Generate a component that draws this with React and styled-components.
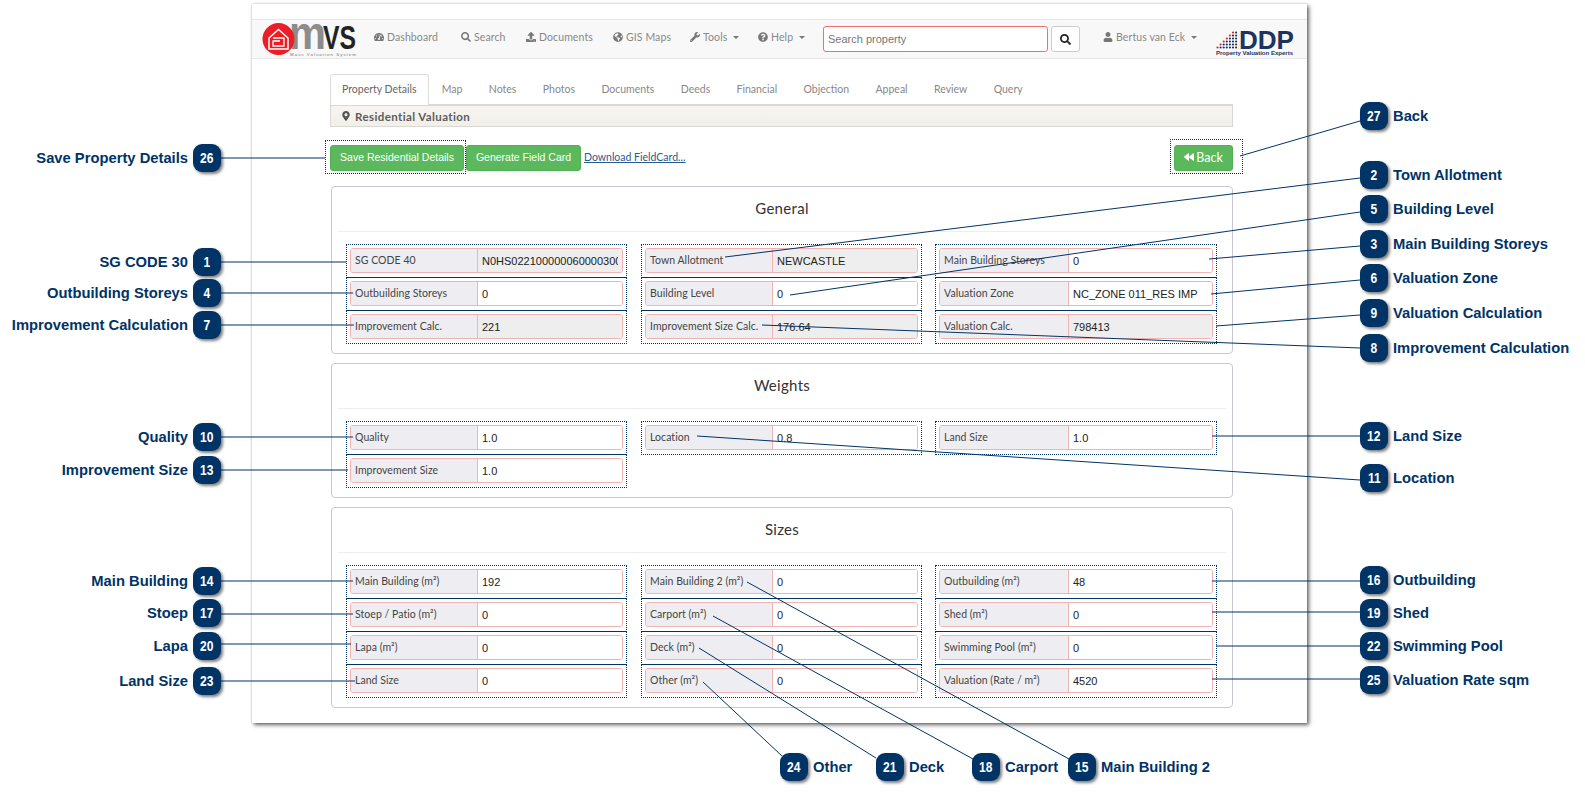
import React from 'react';
import styled, { createGlobalStyle } from 'styled-components';
import {
  FaTachometerAlt,
  FaSearch,
  FaUpload,
  FaGlobeAmericas,
  FaWrench,
  FaQuestionCircle,
  FaUser,
  FaMapMarkerAlt,
  FaBackward,
} from 'react-icons/fa';

const NAVY = '#003366';
const UI_FONT = '"Lato", "Noto Sans", sans-serif';
const ARIAL = '"Liberation Sans", Arial, sans-serif';

const GlobalStyle = createGlobalStyle`
  html, body {
    margin: 0;
    padding: 0;
    background: #fff;
    font-family: ${ARIAL};
  }
  * { box-sizing: border-box; }
`;

const Page = styled.div`
  position: relative;
  width: 1585px;
  height: 792px;
  overflow: hidden;
  padding: 4px 0 0 252px;
`;

const Shot = styled.div`
  width: 1055px;
  height: 719px;
  background: #fff;
  padding-top: 15px;
  box-shadow: 2px 2px 4px rgba(0, 0, 0, 0.6), 0 0 2px rgba(0, 0, 0, 0.18);
`;

const Navbar = styled.nav`
  display: flex;
  align-items: center;
  height: 40px;
  padding-left: 10px;
  background: #f8f8f8;
  border-top: 1px solid #e7e7e7;
  border-bottom: 1px solid #e7e7e7;
`;

const NavList = styled.div`
  display: flex;
  align-items: center;
  margin-left: 7px;
`;

const NavItem = styled.a`
  display: flex;
  align-items: center;
  gap: 3px;
  width: ${(props) => props.$w}px;
  padding-left: 10px;
  margin-top: -4px;
  font: 400 10.5px ${UI_FONT};
  letter-spacing: 0.1px;
  color: #888;
  white-space: nowrap;
  svg { font-size: 10px; color: #777; }
`;

const Caret = styled.span`
  width: 0;
  height: 0;
  margin-left: 3px;
  border-top: 3px solid #777;
  border-left: 3px solid transparent;
  border-right: 3px solid transparent;
`;

const SearchInput = styled.input`
  width: 225px;
  height: 26px;
  padding: 0 4px;
  border: 1px solid #f07070;
  border-radius: 3px;
  background: #fff;
  font: 11px ${ARIAL};
  &::placeholder { color: #777; opacity: 1; }
`;

const SearchButton = styled.button`
  display: flex;
  align-items: center;
  justify-content: center;
  width: 29px;
  height: 26px;
  margin-left: 3px;
  padding: 0;
  background: #fff;
  border: 1px solid #ccc;
  border-radius: 3px;
  color: #222;
  font-size: 11px;
`;

const UserMenu = styled(NavItem)`
  margin-left: 23px;
  padding: 0;
`;

const Content = styled.div`
  width: 903px;
  margin-left: 78px;
`;

const Tabs = styled.div`
  display: flex;
  align-items: flex-end;
  height: 30px;
  margin-top: 15px;
`;

const Tab = styled.a`
  display: flex;
  align-items: center;
  height: ${(props) => (props.$active ? '31px' : '30px')};
  padding: 0 ${(props) => (props.$active ? '11px' : '12.2px')} 2px;
  margin-bottom: ${(props) => (props.$active ? '-1px' : '0')};
  font: 400 10.5px ${UI_FONT};
  color: ${(props) => (props.$active ? '#666' : '#888')};
  background: ${(props) => (props.$active ? '#fff' : 'transparent')};
  border: ${(props) => (props.$active ? '1px solid #ddd' : '1px solid transparent')};
  border-bottom: none;
  border-radius: 3px 3px 0 0;
  position: relative;
  z-index: 1;
`;

const Heading = styled.div`
  display: flex;
  align-items: center;
  gap: 4px;
  height: 23px;
  padding-left: 10px;
  background: linear-gradient(#f7f5f1, #f2efe9);
  border: 1px solid #d8d8d4;
  border-top: 2px solid #d8d8d4;
  font: 700 11.5px ${UI_FONT};
  letter-spacing: 0.4px;
  color: #5c5c5c;
  svg { font-size: 10px; color: #555; }
`;

const ActionRow = styled.div`
  display: flex;
  align-items: flex-start;
  height: 34px;
  margin: 13px -10px 0 -5px;
`;

const Hotspot = styled.div`
  border: 1px dotted ${NAVY};
`;

const SaveSpot = styled(Hotspot)`
  width: 141px;
  height: 34px;
  padding: 4px 1px 2px 4px;
`;

const BackSpot = styled(Hotspot)`
  width: 73px;
  height: 35px;
  margin-left: auto;
  margin-top: -1px;
  padding: 5px 9px 3px 3px;
`;

const GreenButton = styled.button`
  height: 26px;
  padding: 0 0 2px;
  background: #5cb85c;
  border: 1px solid #55b055;
  border-radius: 3px;
  color: #fff;
  font: 10.5px ${ARIAL};
  white-space: nowrap;
`;

const SaveButton = styled(GreenButton)`
  width: 134px;
`;

const CardButton = styled(GreenButton)`
  width: 115px;
  margin: 5px 0 0 0;
`;

const DownloadLink = styled.a`
  margin: 11px 0 0 3px;
  font: 400 10.5px ${UI_FONT};
  color: #2a5a8f;
  text-decoration: underline;
`;

const BackButton = styled(GreenButton)`
  display: flex;
  align-items: center;
  justify-content: center;
  gap: 2px;
  width: 59px;
  font: 400 12.5px ${UI_FONT};
  svg { font-size: 10px; }
`;

const Sections = styled.div`
  display: flex;
  flex-direction: column;
  gap: 9px;
  margin-top: 12px;
  padding-left: 1px;
`;

const Section = styled.section`
  padding: 0 6px 9px;
  border: 1px solid #c8c8d4;
  border-radius: 4px;
`;

const SectionTitle = styled.h3`
  display: flex;
  align-items: center;
  justify-content: center;
  height: 45px;
  margin: 0;
  padding-bottom: 3px;
  border-bottom: 1px solid #eee;
  font: 400 15px ${UI_FONT};
  letter-spacing: 0.3px;
  color: #333;
`;

const FieldGrid = styled.div`
  display: grid;
  grid-template-columns: 295px 294px 282px;
  margin: 12px 0 0 8px;
`;

const FieldSpot = styled(Hotspot)`
  height: 34px;
  padding: 3px;
  & + & {
    margin-top: -1px;
    border-top: 1px solid ${NAVY};
  }
`;

const Field = styled.div`
  display: flex;
  height: 25px;
  border: 1px solid #f3b2b2;
  border-radius: 3px;
  overflow: hidden;
`;

const Addon = styled.span`
  display: flex;
  align-items: center;
  flex: 0 0 127px;
  padding: 0 0 2px 4px;
  background: #eeeef2;
  border-right: 1px solid #f3b2b2;
  font: 400 10.5px ${UI_FONT};
  letter-spacing: 0.05px;
  color: #444;
  white-space: nowrap;
`;

const FieldColumn = styled.div`
  display: flex;
  flex-direction: column;
  width: 281px;
  &:nth-child(3) {
    width: 282px;
    ${Addon} { flex-basis: 129px; }
  }
`;

const Value = styled.input`
  flex: 1;
  min-width: 0;
  padding: 0 4px;
  border: none;
  outline: none;
  background: ${(props) => (props.readOnly ? '#eee' : '#fff')};
  font: 11px ${ARIAL};
  color: #222;
`;

const Overlay = styled.svg`
  position: absolute;
  left: 0;
  top: 0;
  pointer-events: none;
`;

const Callout = styled.div`
  position: absolute;
  top: ${(props) => props.$y - 14}px;
  ${(props) => (props.$left
    ? `right: ${1585 - props.$x - 14}px; flex-direction: row-reverse;`
    : `left: ${props.$x - 14}px;`)}
  display: flex;
  align-items: center;
  gap: 5px;
`;

const Badge = styled.span`
  display: flex;
  align-items: center;
  justify-content: center;
  width: 28px;
  height: 28px;
  border-radius: 9px;
  background: ${NAVY};
  box-shadow: 2px 2px 3px rgba(0, 0, 0, 0.5);
  color: #fff;
  font: 700 14px ${ARIAL};
`;

const BadgeNumber = styled.span`
  display: inline-block;
  transform: scaleX(0.86);
`;

const CalloutLabel = styled.span`
  font: 700 14.75px ${ARIAL};
  color: ${NAVY};
  white-space: nowrap;
`;

// [badge number, label, badge centre x, y, line start x, y, line end x, y]
const callouts = [
  [26, 'Save Property Details', 207, 158, 193, 158, 325, 158, true],
  [1, 'SG CODE 30', 207, 262, 193, 262, 346, 262, true],
  [4, 'Outbuilding Storeys', 207, 293, 193, 293, 353, 293, true],
  [7, 'Improvement Calculation', 207, 325, 193, 325, 354, 325, true],
  [10, 'Quality', 207, 437, 193, 437, 353, 437, true],
  [13, 'Improvement Size', 207, 470, 193, 470, 348, 470, true],
  [14, 'Main Building', 207, 581, 193, 581, 353, 581, true],
  [17, 'Stoep', 207, 613, 193, 614, 353, 614, true],
  [20, 'Lapa', 207, 646, 193, 644, 351, 644, true],
  [23, 'Land Size', 207, 681, 193, 681, 355, 681, true],
  [27, 'Back', 1374, 116, 1360, 121, 1240, 156],
  [2, 'Town Allotment', 1374, 175, 1360, 178, 725, 257],
  [5, 'Building Level', 1374, 209, 1360, 212, 790, 295],
  [3, 'Main Building Storeys', 1374, 244, 1360, 246, 1209, 259],
  [6, 'Valuation Zone', 1374, 278, 1360, 280, 1211, 294],
  [9, 'Valuation Calculation', 1374, 313, 1360, 315, 1216, 326],
  [8, 'Improvement Calculation', 1374, 348, 1360, 348, 762, 325],
  [12, 'Land Size', 1374, 436, 1360, 436, 1212, 436],
  [11, 'Location', 1374, 478, 1360, 480, 697, 436],
  [16, 'Outbuilding', 1374, 580, 1360, 581, 1212, 581],
  [19, 'Shed', 1374, 613, 1360, 612, 1212, 612],
  [22, 'Swimming Pool', 1374, 646, 1360, 646, 1216, 646],
  [25, 'Valuation Rate sqm', 1374, 680, 1360, 679, 1212, 679],
  [24, 'Other', 794, 767, 782, 756, 703, 682],
  [21, 'Deck', 890, 767, 876, 758, 699, 648],
  [18, 'Carport', 986, 767, 973, 759, 713, 616],
  [15, 'Main Building 2', 1082, 767, 1069, 759, 747, 582],
];

const sections = [
  {
    title: 'General',
    columns: [
      [['SG CODE 40', 'N0HS0221000000600003000', true], ['Outbuilding Storeys', '0'], ['Improvement Calc.', '221', true]],
      [['Town Allotment', 'NEWCASTLE', true], ['Building Level', '0'], ['Improvement Size Calc.', '176.64', true]],
      [['Main Building Storeys', '0'], ['Valuation Zone', 'NC_ZONE 011_RES IMP'], ['Valuation Calc.', '798413', true]],
    ],
  },
  {
    title: 'Weights',
    columns: [
      [['Quality', '1.0'], ['Improvement Size', '1.0']],
      [['Location', '0.8']],
      [['Land Size', '1.0']],
    ],
  },
  {
    title: 'Sizes',
    columns: [
      [['Main Building (m²)', '192'], ['Stoep / Patio (m²)', '0'], ['Lapa (m²)', '0'], ['Land Size', '0']],
      [['Main Building 2 (m²)', '0'], ['Carport (m²)', '0'], ['Deck (m²)', '0'], ['Other (m²)', '0']],
      [['Outbuilding (m²)', '48'], ['Shed (m²)', '0'], ['Swimming Pool (m²)', '0'], ['Valuation (Rate / m²)', '4520']],
    ],
  },
];

const tabs = ['Map', 'Notes', 'Photos', 'Documents', 'Deeds', 'Financial', 'Objection', 'Appeal', 'Review', 'Query'];

function MvsLogo() {
  return (
    <svg width="95" height="35" viewBox="0 0 95 35" overflow="visible">
      <text x="27" y="26" fontFamily="Liberation Sans" fontWeight="700" fontSize="46" fill="#8c8c8c" textLength="37" lengthAdjust="spacingAndGlyphs">m</text>
      <text x="61" y="26" fontFamily="Liberation Sans" fontWeight="700" fontSize="33" fill="#222" textLength="33" lengthAdjust="spacingAndGlyphs">VS</text>
      <text x="28" y="33" fontFamily="Liberation Sans" fontSize="4.4" fill="#777" textLength="66">Mass Valuation System</text>
      <circle cx="16.5" cy="16" r="16" fill="#ee1c25" />
      <path d="M7 15 L16.5 6.5 L26 15 V26 H7 Z" fill="none" stroke="#fff" strokeWidth="1.5" />
      <path d="M11 15 H22 V23 H11 V18 H18" fill="none" stroke="#fff" strokeWidth="1.3" />
    </svg>
  );
}

function DdpLogo() {
  const dots = [];
  for (let col = 0; col < 7; col += 1) {
    const count = col + 1;
    for (let row = 0; row < count && row < 6; row += 1) {
      dots.push(
        <circle
          key={`${col}-${row}`}
          cx={1.5 + col * 3.1}
          cy={19.5 - row * 3}
          r="1.1"
          fill={row === count - 1 ? '#e0202a' : '#1d3461'}
        />
      );
    }
  }
  return (
    <svg width="78" height="28" viewBox="0 0 78 28" overflow="visible">
      {dots}
      <text x="23" y="21" fontFamily="Liberation Sans" fontWeight="700" fontSize="25" fill="#1d3461" textLength="55" lengthAdjust="spacingAndGlyphs">DDP</text>
      <text x="0" y="27" fontFamily="Liberation Sans" fontWeight="700" fontSize="5.6" fill="#1d3461" textLength="77" lengthAdjust="spacingAndGlyphs">Property Valuation Experts</text>
    </svg>
  );
}

const LogoSlot = styled.div`
  display: flex;
  margin-top: 3px;
`;

const DdpSlot = styled.div`
  display: flex;
  margin: 6px 0 0 0;
`;

function App() {
  return (
    <Page>
      <GlobalStyle />
      <Shot>
        <Navbar>
          <LogoSlot><MvsLogo /></LogoSlot>
          <NavList>
            <NavItem $w={87}><FaTachometerAlt />Dashboard</NavItem>
            <NavItem $w={65}><FaSearch />Search</NavItem>
            <NavItem $w={87}><FaUpload />Documents</NavItem>
            <NavItem $w={77}><FaGlobeAmericas />GIS Maps</NavItem>
            <NavItem $w={68}><FaWrench />Tools<Caret /></NavItem>
            <NavItem $w={75}><FaQuestionCircle />Help<Caret /></NavItem>
          </NavList>
          <SearchInput placeholder="Search property" />
          <SearchButton><FaSearch /></SearchButton>
          <UserMenu $w={113}><FaUser />Bertus van Eck<Caret /></UserMenu>
          <DdpSlot><DdpLogo /></DdpSlot>
        </Navbar>
        <Content>
          <Tabs>
            <Tab $active>Property Details</Tab>
            {tabs.map((tab) => <Tab key={tab}>{tab}</Tab>)}
          </Tabs>
          <Heading><FaMapMarkerAlt />Residential Valuation</Heading>
          <ActionRow>
            <SaveSpot><SaveButton>Save Residential Details</SaveButton></SaveSpot>
            <CardButton>Generate Field Card</CardButton>
            <DownloadLink>Download FieldCard...</DownloadLink>
            <BackSpot><BackButton><FaBackward />Back</BackButton></BackSpot>
          </ActionRow>
          <Sections>
            {sections.map((section) => (
              <Section key={section.title}>
                <SectionTitle>{section.title}</SectionTitle>
                <FieldGrid>
                  {section.columns.map((column, i) => (
                    <FieldColumn key={i}>
                      {column.map(([label, value, readOnly]) => (
                        <FieldSpot key={label}>
                          <Field>
                            <Addon>{label}</Addon>
                            <Value value={value} readOnly={!!readOnly} onChange={() => {}} />
                          </Field>
                        </FieldSpot>
                      ))}
                    </FieldColumn>
                  ))}
                </FieldGrid>
              </Section>
            ))}
          </Sections>
        </Content>
      </Shot>
      <Overlay width="1585" height="792">
        {callouts.map(([n, , , , x1, y1, x2, y2]) => (
          <line key={n} x1={x1} y1={y1} x2={x2} y2={y2} stroke={NAVY} strokeWidth="1" />
        ))}
      </Overlay>
      {callouts.map(([n, label, x, y, , , , , left]) => (
        <Callout key={n} $x={x} $y={y} $left={left}>
          <Badge><BadgeNumber>{n}</BadgeNumber></Badge>
          <CalloutLabel>{label}</CalloutLabel>
        </Callout>
      ))}
    </Page>
  );
}

export default App;
